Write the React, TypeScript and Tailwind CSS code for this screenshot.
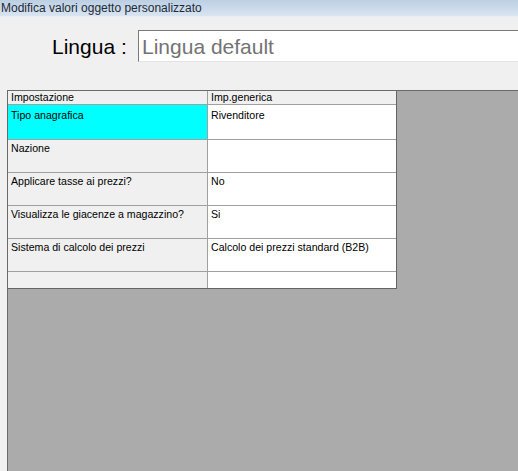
const rows = [
  { label: "Tipo anagrafica", value: "Rivenditore", h: "h-[35px]", pt: "pt-[5px]", selected: true },
  { label: "Nazione", value: "", h: "h-[33px]", pt: "pt-[3px]" },
  { label: "Applicare tasse ai prezzi?", value: "No", h: "h-[33px]", pt: "pt-[3px]" },
  { label: "Visualizza le giacenze a magazzino?", value: "Si", h: "h-[33px]", pt: "pt-[3px]" },
  { label: "Sistema di calcolo dei prezzi", value: "Calcolo dei prezzi standard (B2B)", h: "h-[33px]", pt: "pt-[3px]" },
  { label: "", value: "", h: "h-[16px]", pt: "pt-[3px]" },
]

export default function App() {
  return (
    <div className="flex h-[471px] w-[518px] flex-col overflow-hidden bg-[#f0f0f0] font-['Liberation_Sans',Arial,sans-serif] text-black">
      {/* title bar */}
      <div className="flex h-[17px] items-center border-b border-[#e6edf5] bg-gradient-to-b from-[#bccfe3] to-[#d9e5f1] pl-[1px] text-[12px] leading-none text-[#1e2a36]">
        Modifica valori oggetto personalizzato
      </div>

      {/* lingua */}
      <div className="mt-[13px] flex h-[32px] items-center">
        <span className="ml-[52px] w-[86px] text-[21px] leading-none text-black">Lingua :</span>
        <div className="flex h-[32px] flex-1 items-center border-l border-t border-[#7a7a7a] border-b-[#e3e3e3] border-b bg-white pl-[3px] text-[21px] leading-none text-[#737373]">
          Lingua default
        </div>
      </div>

      {/* grid area */}
      <div className="mt-[28px] ml-[7px] flex-1 border-l border-t border-[#6a6a6a] bg-[#ababab]">
        <div className="w-[389px] border-b border-r border-[#646464] bg-white text-[10.6px] leading-none">
          <div className="flex h-[14px] border-b border-[#a0a0a0] bg-[#f0f0f0]">
            <div className="w-[200px] border-r border-[#a0a0a0] pl-[3px] pt-[1px]">Impostazione</div>
            <div className="flex-1 pl-[3px] pt-[1px]">Imp.generica</div>
          </div>
          {rows.map((r, i) => (
            <div key={i} className={`flex ${r.h} border-b border-[#a0a0a0] last:border-b-0`}>
              <div className={`w-[200px] border-r border-[#a0a0a0] pl-[3px] ${r.pt} ${r.selected ? "bg-[#00ffff]" : "bg-[#f0f0f0]"}`}>
                {r.label}
              </div>
              <div className={`flex-1 bg-white pl-[3px] ${r.pt}`}>{r.value}</div>
            </div>
          ))}
        </div>
      </div>
    </div>
  )
}
